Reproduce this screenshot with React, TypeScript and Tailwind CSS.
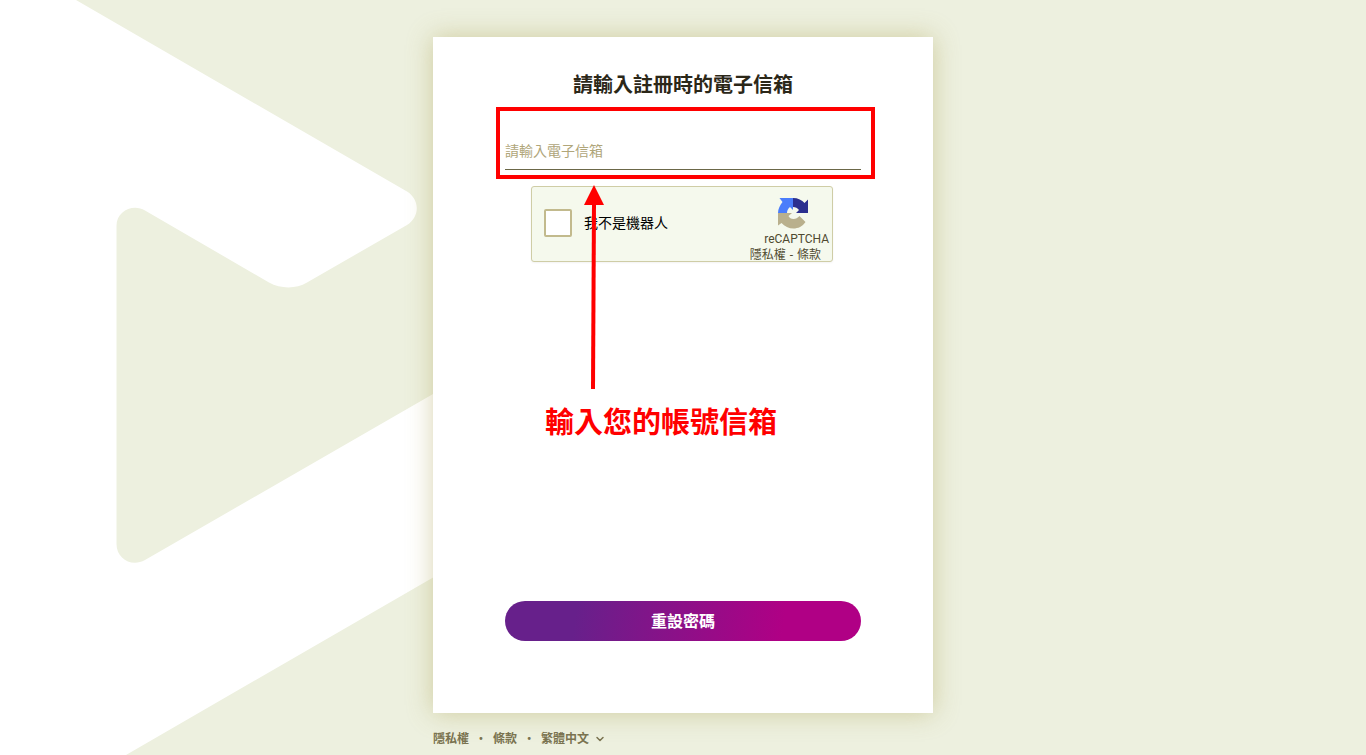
import { useState } from "react";
import { ChevronDown } from "lucide-react";

function BackgroundShape() {
  return (
    <svg
      aria-hidden="true"
      viewBox="0 0 440 755"
      className="absolute left-0 top-0 w-[440px] h-[755px]"
    >
      <path
        fill="#ffffff"
        d="M0 0H76L407 191.500C420 199.500 420 217 407 225L307 282.500C296 289 281 289 269 282.500L145 210.500C133 203.500 116.500 211 116.500 226V544C116.500 559 132 567.500 145 560L440 390V573.500L126 755H0Z"
      />
    </svg>
  );
}

function RecaptchaLogo() {
  return (
    <svg aria-hidden="true" viewBox="0 0 64 64" className="w-8 h-8">
      <path
        fill="#2b2f8f"
        d="M32 2C42 2 50 6 55 12L62 5V32H38L44 26C41 22 37 20 32 20Z"
      />
      <path
        fill="#4a7dfb"
        d="M32 2V26L26 20C22 23 20 27 20 32H2C2 24 6 16 11 10L5 2Z"
      />
      <path
        fill="#b9b08d"
        d="M2 32H30L23 38C25 42 28 44 33 44C38 44 41 42 45 38L57 50C51 59 42 63 33 63C24 63 15 59 9 52L2 57Z"
      />
    </svg>
  );
}

function Recaptcha() {
  const [checked, setChecked] = useState(false);

  return (
    <div className="flex justify-between mt-4 ml-[26px] w-[302px] h-[76px] rounded-[3px] border border-[#cfcda6] bg-[#f5f9ed] shadow-xs">
      <div className="flex items-center gap-3 pl-3 pb-0.5">
        <input
          id="robot"
          type="checkbox"
          checked={checked}
          onChange={(e) => setChecked(e.target.checked)}
          className="appearance-none w-7 h-7 rounded-[2px] border-2 border-[#c2ba8d] bg-white checked:bg-[#4a7dfb]"
        />
        <label htmlFor="robot" className="text-sm text-black">
          我不是機器人
        </label>
      </div>
      <div className="flex flex-col items-end pt-2.5 pr-[3px] text-xs text-[#4f4a30]">
        <div className="pr-5">
          <RecaptchaLogo />
        </div>
        <span className="leading-5">reCAPTCHA</span>
        <div className="flex gap-1 pr-2 leading-3">
          <a href="#privacy">隱私權</a>
          <span>-</span>
          <a href="#terms">條款</a>
        </div>
      </div>
    </div>
  );
}

function ArrowUp() {
  return (
    <svg
      aria-hidden="true"
      viewBox="0 0 20 204"
      className="absolute left-[151px] top-[148px] w-5 h-[204px]"
    >
      <path d="M9 204L10 18" stroke="#ff0000" strokeWidth="4" />
      <path d="M10 0L20 20H0Z" fill="#ff0000" />
    </svg>
  );
}

export default function App() {
  const [email, setEmail] = useState("");
  const [lang, setLang] = useState("zh-TW");

  return (
    <div
      lang="zh-Hant"
      className="relative min-h-screen overflow-hidden bg-[#edf0df] font-[Roboto,'Noto_Sans_CJK_TC',sans-serif]"
    >
      <BackgroundShape />
      <div className="relative mx-auto w-full max-w-[500px] pt-[37px]">
        <main className="relative bg-white shadow-[0_0_24px_rgba(170,160,80,0.45)]">
          <form
            onSubmit={(e) => e.preventDefault()}
            className="flex flex-col min-h-[calc(100vh-79px)] px-[72px] pt-[34px] pb-[72px]"
          >
            <h1 className="text-xl leading-7 font-bold text-center text-[#2b2718]">
              請輸入註冊時的電子信箱
            </h1>
            <div className="relative mt-8">
              <input
                type="email"
                aria-label="電子信箱"
                placeholder="請輸入電子信箱"
                value={email}
                onChange={(e) => setEmail(e.target.value)}
                className="block w-full h-[39px] pt-0.5 border-b border-[#6b6747] text-sm text-[#2b2718] placeholder:text-[#b0a67a] outline-none"
              />
              <div className="absolute -left-[9px] -right-[14px] -top-6 -bottom-[9px] border-4 border-[#ff0000] pointer-events-none" />
            </div>
            <Recaptcha />
            <button
              type="submit"
              className="mt-auto w-full h-10 pt-0.5 rounded-full bg-[linear-gradient(98deg,#67208b_20%,#b00085_78%)] text-base font-bold text-white cursor-pointer"
            >
              重設密碼
            </button>
          </form>
          <ArrowUp />
          <p className="absolute left-[112px] top-[366px] text-[29px] leading-10 font-bold text-[#ff0000] whitespace-nowrap">
            輸入您的帳號信箱
          </p>
        </main>
        <footer className="flex items-center pt-4 text-xs leading-5 font-bold text-[#7a7350]">
          <a href="#privacy">隱私權</a>
          <span className="w-6 text-center">•</span>
          <a href="#terms">條款</a>
          <span className="w-6 text-center">•</span>
          <div className="relative">
            <select
              aria-label="語言"
              value={lang}
              onChange={(e) => setLang(e.target.value)}
              className="appearance-none pr-4 outline-none cursor-pointer"
            >
              <option value="zh-TW">繁體中文</option>
            </select>
            <ChevronDown
              strokeWidth={3}
              className="absolute right-0 top-1 w-3 h-3 pointer-events-none"
            />
          </div>
        </footer>
      </div>
    </div>
  );
}
